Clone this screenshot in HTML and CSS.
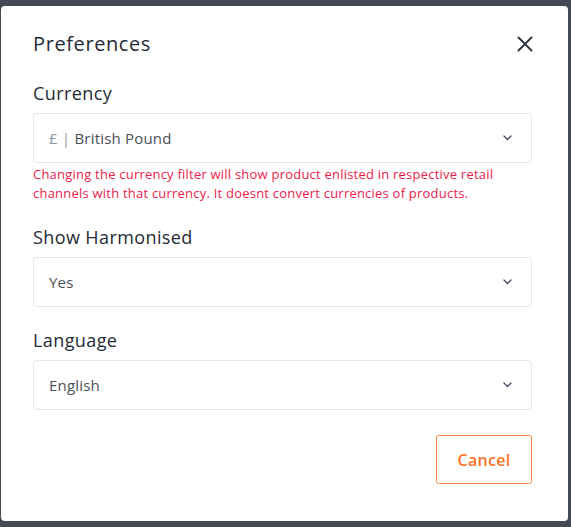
FILE: index.html
```html
<!DOCTYPE html>
<html>
<head>
<meta charset="utf-8">
<link rel="stylesheet" href="styles.css">
</head>
<body>
<div class="modal">
  <div class="header">
    <h2 class="title">Preferences</h2>
    <button class="close" aria-label="Close">
      <svg width="16" height="16" viewBox="0 0 16 16"><path d="M1.5 1.5 L14.5 14.5 M14.5 1.5 L1.5 14.5" stroke="#2e3646" stroke-width="1.9" stroke-linecap="round" fill="none"/></svg>
    </button>
  </div>

  <div class="field">
    <div class="label">Currency</div>
    <div class="select"><span class="value"><span class="sym">£ |</span> British Pound</span><span class="chev"><svg width="9" height="6" viewBox="0 0 9 6"><path d="M1 1 L4.5 4.5 L8 1" stroke="#4a5262" stroke-width="1.4" fill="none" stroke-linecap="round" stroke-linejoin="round"/></svg></span></div>
    <p class="help">Changing the currency filter will show product enlisted in respective retail channels with that currency. It doesnt convert currencies of products.</p>
  </div>

  <div class="field">
    <div class="label">Show Harmonised</div>
    <div class="select"><span class="value">Yes</span><span class="chev"><svg width="9" height="6" viewBox="0 0 9 6"><path d="M1 1 L4.5 4.5 L8 1" stroke="#4a5262" stroke-width="1.4" fill="none" stroke-linecap="round" stroke-linejoin="round"/></svg></span></div>
  </div>

  <div class="field field-last">
    <div class="label">Language</div>
    <div class="select"><span class="value">English</span><span class="chev"><svg width="9" height="6" viewBox="0 0 9 6"><path d="M1 1 L4.5 4.5 L8 1" stroke="#4a5262" stroke-width="1.4" fill="none" stroke-linecap="round" stroke-linejoin="round"/></svg></span></div>
  </div>

  <div class="footer">
    <button class="cancel">Cancel</button>
  </div>
</div>
</body>
</html>
```

FILE: styles.css
```css
html, body {
  margin: 0;
  padding: 0;
}
body {
  background: #444a56;
  width: 571px;
  height: 527px;
  overflow: hidden;
  font-family: "Open Sans", "Liberation Sans", sans-serif;
}
.modal {
  box-sizing: border-box;
  margin: 6px 0 0 1px;
  width: 567px;
  height: 515px;
  background: #ffffff;
  border-radius: 4px;
  padding: 24px 36px 0 32px;
}
.header {
  display: flex;
  justify-content: space-between;
  align-items: center;
  height: 28px;
}
.title {
  margin: 0;
  font-size: 20px;
  font-weight: 400;
  letter-spacing: 0.6px;
  color: #252b36;
  line-height: 28px;
}
.close {
  border: 0;
  background: none;
  padding: 0;
  width: 16px;
  height: 16px;
  margin-right: -1px;
  display: flex;
}
.field {
  margin-top: 23px;
}
.field + .field {
  margin-top: 22px;
}
.field + .field-last {
  margin-top: 21px;
}
.label {
  font-size: 18px;
  letter-spacing: 0.4px;
  line-height: 24px;
  color: #252b36;
  margin-bottom: 8px;
}
.select {
  box-sizing: border-box;
  height: 50px;
  border: 1px solid #e2e7f1;
  border-radius: 4px;
  display: flex;
  align-items: center;
  justify-content: space-between;
  padding: 0 19px 0 15px;
}
.value {
  font-size: 15px;
  letter-spacing: 0.2px;
  color: #4b4f57;
}
.sym {
  color: #8c96a8;
}
.chev {
  display: flex;
}
.help {
  margin: 2px 0 0 0;
  font-size: 13px;
  letter-spacing: 0.22px;
  line-height: 19px;
  color: #ec1c4b;
}
.footer {
  display: flex;
  justify-content: flex-end;
  margin-top: 25px;
}
.cancel {
  box-sizing: border-box;
  width: 96px;
  height: 49px;
  border: 1.5px solid #fd8a48;
  border-radius: 3px;
  background: #fff;
  color: #fd7226;
  font-family: inherit;
  font-size: 16px;
  font-weight: 600;
  letter-spacing: 0.3px;
}
```
